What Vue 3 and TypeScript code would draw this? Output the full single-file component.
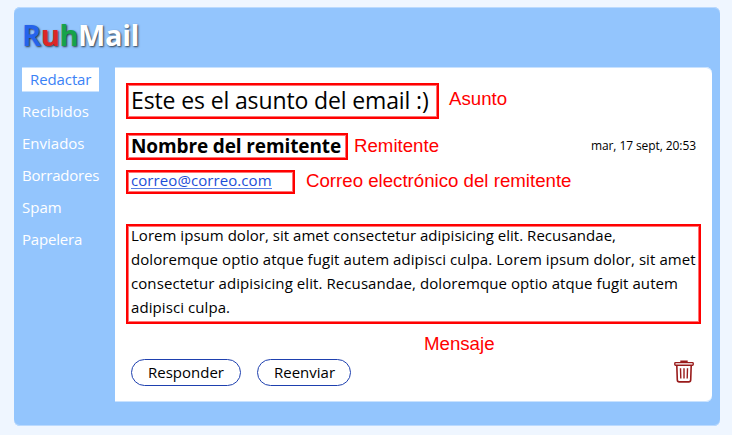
<script setup lang="ts">
const folders: { name: string; key: string }[] = [
  { name: 'Recibidos', key: 'inbox' },
  { name: 'Enviados', key: 'sent' },
  { name: 'Borradores', key: 'drafts' },
  { name: 'Spam', key: 'spam' },
  { name: 'Papelera', key: 'trash' },
]
const lines: string[] = [
  'Lorem ipsum dolor, sit amet consectetur adipisicing elit. Recusandae,',
  'doloremque optio atque fugit autem adipisci culpa. Lorem ipsum dolor, sit amet',
  'consectetur adipisicing elit. Recusandae, doloremque optio atque fugit autem',
  'adipisci culpa.',
]
</script>

<template>
  <div class="page">
    <div class="app">
      <header class="logo"><span class="r">R</span><span class="u">u</span><span class="h">h</span><span class="m">Mail</span></header>
      <div class="body">
        <nav class="side">
          <a class="compose"><span>Redactar</span></a>
          <a v-for="f in folders" :key="f.key" class="folder"><span :class="f.key">{{ f.name }}</span></a>
        </nav>
        <main class="mail">
          <div class="row subject-row">
            <h1 class="box subject"><span>Este es el asunto del email :)</span></h1>
            <span class="note n-subject">Asunto</span>
          </div>
          <div class="row sender-row">
            <h2 class="box sender"><span>Nombre del remitente</span></h2>
            <span class="note n-sender">Remitente</span>
            <time class="date">mar, 17 sept, 20:53</time>
          </div>
          <div class="row address-row">
            <div class="box address"><a>correo@correo.com</a></div>
            <span class="note n-address">Correo electrónico del remitente</span>
          </div>
          <div class="box message">
            <div v-for="(l, i) in lines" :key="i" :class="'line l' + i"><span>{{ l }}</span></div>
          </div>
          <div class="note n-message">Mensaje</div>
          <footer class="actions">
            <button class="btn reply"><span>Responder</span></button>
            <button class="btn forward"><span>Reenviar</span></button>
            <svg class="bin" width="20" height="24" viewBox="0 0 20 24" fill="none" stroke="#991b1b">
              <path d="M7 2V1.3H13V2" stroke-width="1.4" />
              <rect x=".8" y="2.6" width="18.4" height="2.6" rx=".7" stroke-width="1.4" />
              <path d="M2.8 5.5L3.3 19.9Q3.4 21.9 5.2 21.9H14.8Q16.6 21.9 16.7 19.9L17.2 5.5" stroke-width="1.6" />
              <path d="M6.5 8.3L6.8 18.5M10 8.3V18.5M13.5 8.3L13.2 18.5" stroke-width="1.4" />
            </svg>
          </footer>
        </main>
      </div>
    </div>
  </div>
</template>

<style>
body { background: #eff6ff; }
</style>

<style scoped>
* { box-sizing: border-box; }
.page { height: 435px; padding: 7px 12px 0 14px; background: #eff6ff; font-family: "Open Sans", "Noto Sans", sans-serif; font-size: 15px; line-height: 24px; color: #000; overflow: hidden; white-space: nowrap; }
.app { height: 419px; background: #93c5fd; border-radius: 6px; padding: 8px; box-shadow: inset 0 1px #bbdafe, inset 0 -1px #bbdafe; }
.logo { height: 52px; padding-top: 1px; font-size: 29px; line-height: 38px; font-weight: 700; letter-spacing: -.4px; text-shadow: 1px 1px 2px rgba(0, 0, 0, .7); }
.r { color: #2563eb; }
.u { color: #dc2626; }
.h { color: #16a34a; }
.m { color: #fff; }
.body { display: flex; height: 335px; }
.side { width: 93px; display: flex; flex-direction: column; gap: 8px; color: #fff; }
.compose { width: 77px; height: 25px; margin-bottom: -1px; padding-left: 8px; background: #fff; color: #3b82f6; letter-spacing: -.1px; box-shadow: inset 0 1px #c9e2fe, inset 0 -1px #c9e2fe; }
.folder { height: 24px; }
.drafts, .trash { letter-spacing: -.2px; }
.mail { width: 597px; background: #fff; border-radius: 0 6px 6px 0; padding: 16px 11px 0; box-shadow: inset 0 1px #c9e2fe, inset 0 -1px #c9e2fe; }
.row { display: flex; }
.box { border: 2px solid #f00; box-shadow: inset 0 0 0 1px rgba(255, 0, 0, .55); margin: 0; font-weight: 400; }
.note { font-family: "Liberation Sans", sans-serif; color: #f00; font-size: 18.67px; line-height: 24px; }
.subject-row { height: 50px; }
.subject { width: 313px; height: 36px; padding-left: 3px; font-size: 23px; line-height: 31px; letter-spacing: -.13px; }
.n-subject { margin: 4px 0 0 10px; }
.sender-row { height: 37px; }
.sender { width: 222px; height: 27px; padding-left: 3px; font-size: 19px; line-height: 23px; font-weight: 700; letter-spacing: -.12px; }
.n-sender { margin: 1px 0 0 6px; }
.date { margin: 1px 5px 0 auto; font-size: 12px; letter-spacing: -.08px; }
.address-row { height: 54px; }
.address { width: 169px; height: 24px; padding-left: 3px; line-height: 16px; color: #1d4ed8; letter-spacing: .08px; }
.address a { display: block; width: 141px; height: 17px; border-bottom: 1px solid #5b7fe3; }
.n-address { margin: -1px 0 0 11px; }
.message { width: 575px; height: 100px; padding: 0 0 0 3px; letter-spacing: .08px; }
.line { height: 24px; line-height: 19px; }
.line.l0 { letter-spacing: .03px; }
.n-message { margin: 8px 0 0 298px; }
.actions { display: flex; height: 27px; margin: 3px 7px 0 5px; align-items: center; }
.btn { height: 27px; padding: 0 0 1px 16px; border: 1px solid #1e40af; border-radius: 13.5px; background: #fff; color: #000; font: inherit; line-height: 24px; text-align: left; }
.reply { width: 110px; margin-right: 16px; }
.forward { width: 94px; }
.bin { margin-left: auto; margin-top: -1px; }
</style>
